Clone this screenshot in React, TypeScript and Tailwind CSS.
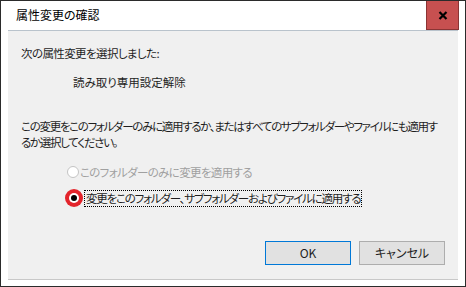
const jp = "font-['Noto_Sans_CJK_JP','Noto_Sans',sans-serif] [font-feature-settings:'palt']";

function DisabledRadio() {
  return <span className="w-[12px] h-[12px] rounded-full border border-[#c4c4c4] bg-white shrink-0" />;
}

function MarkedRadio() {
  return (
    <svg width="18" height="18" viewBox="0 0 18 18" className="shrink-0">
      <circle cx="9" cy="9" r="9" fill="#e3242b" />
      <circle cx="9" cy="9" r="5" fill="#ffffff" />
      <circle cx="9" cy="9" r="3" fill="#000000" />
    </svg>
  );
}

export default function App() {
  return (
    <div className={`w-[466px] h-[287px] border border-[#2b2b2b] bg-white flex flex-col text-[#1e1e1e] ${jp}`}>
      {/* title bar */}
      <div className="h-[29px] flex items-start justify-between shrink-0">
        <span className="pl-[15px] pt-[6px] text-[12px] leading-[16px] text-black">属性変更の確認</span>
        <button
          type="button"
          className="mr-[6px] w-[33px] h-[29px] bg-[#c75050] border border-t-0 border-[#8a3434] flex items-center justify-center"
        >
          <svg width="10" height="9" viewBox="0 0 10 9">
            <path d="M1.5 1 L8.5 8 M8.5 1 L1.5 8" stroke="#000" strokeWidth="2.2" />
          </svg>
        </button>
      </div>

      {/* body */}
      <div className="mx-[7px] mb-[6px] flex-1 bg-[#f0f0f0] border-t border-[#b9c3cc] border-b border-b-[#c8c8c8] pl-[13px] pr-[13px] pt-[14px] flex flex-col text-[11.5px] leading-[16px]">
        <p className="tracking-[-0.6px]">次の属性変更を選択しました:</p>
        <p className="mt-[13px] ml-[52px]">読み取り専用設定解除</p>

        <p className="mt-[28px] whitespace-nowrap tracking-[-1.3px]">
          この変更をこのフォルダーのみに適用するか、またはすべてのサブフォルダーやファイルにも適用す
          <br />
          るか選択してください。
        </p>

        <div className="mt-[14px] ml-[46px] flex items-center gap-[1px] text-[#a0a0a0]">
          <DisabledRadio />
          <span className="tracking-[-0.65px]">このフォルダーのみに変更を適用する</span>
        </div>

        <div className="mt-[9px] ml-[44px] flex items-center gap-[1px]">
          <MarkedRadio />
          <span className="border border-dotted border-black px-[1px] leading-[15px] tracking-[-1.2px]">
            変更をこのフォルダー、サブフォルダーおよびファイルに適用する
          </span>
        </div>

        <div className="mt-auto mb-[14px] flex justify-end gap-[8px] text-[12px]">
          <button type="button" className="w-[86px] h-[24px] bg-[#e1e1e1] border border-[#0078d7]">
            OK
          </button>
          <button type="button" className="w-[86px] h-[24px] bg-[#e1e1e1] border border-[#adadad]">
            キャンセル
          </button>
        </div>
      </div>
    </div>
  );
}
